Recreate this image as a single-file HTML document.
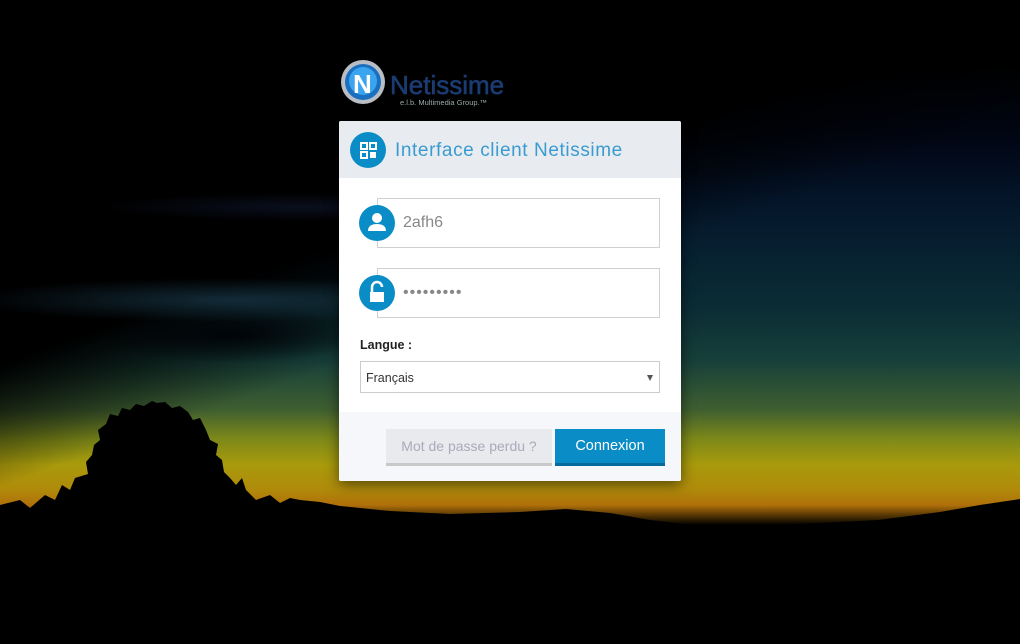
<!DOCTYPE html>
<html><head><meta charset="utf-8"><style>
*{margin:0;padding:0;box-sizing:border-box}
body{width:1020px;height:644px;overflow:hidden;position:relative;font-family:"Liberation Sans",sans-serif;background:#000}
.bg{position:absolute;inset:0;
background:linear-gradient(180deg,#000 0,#000 60px,#010614 140px,#04152a 200px,#072231 260px,#0b2d35 310px,#163f3a 360px,#3f5f30 410px,#7f8a18 440px,#a99a0c 465px,#b08a0a 490px,#b0700a 505px,#000 525px,#000 100%);}
.dark{position:absolute;inset:0;
background:
linear-gradient(160deg,#000 0,#000 36%,rgba(0,0,0,0) 48%),
radial-gradient(ellipse 380px 110px at 180px 240px,rgba(0,0,0,.85),transparent 80%);}
.cl{position:absolute;inset:0;background:
radial-gradient(ellipse 260px 22px at 230px 300px,rgba(30,70,90,.6),transparent),
radial-gradient(ellipse 140px 28px at 230px 335px,rgba(0,2,6,.95),transparent),
radial-gradient(ellipse 200px 14px at 300px 207px,rgba(20,30,60,.5),transparent)}
.card{position:absolute;left:339px;top:121px;width:342px;height:360px;background:#fff;border-radius:2px;box-shadow:0 3px 14px rgba(0,0,0,.55);overflow:hidden}
.hd{height:57px;background:#e8ecf0;position:relative}
.circ{position:absolute;width:36px;height:36px;border-radius:50%;background:#0a8dc6}
.hd .circ{left:11px;top:11px}
.hd .t{position:absolute;left:56px;top:19px;font-size:19px;color:#3a9bd0;letter-spacing:.6px}
.inp{position:absolute;left:38px;width:283px;height:50px;border:1px solid #d0d0d0;background:#fff;font-size:16px;color:#888;padding:15px 0 0 25px}
.ic{position:absolute;left:20px}
.lbl{position:absolute;left:21px;top:217px;font-weight:bold;font-size:12.5px;color:#222}
.sel{position:absolute;left:21px;top:240px;width:300px;height:32px;border:1px solid #ccc;font-size:12.5px;color:#333;padding:9px 0 0 5px}
.sel:after{content:"";position:absolute;right:6px;top:13px;border:3.5px solid transparent;border-top:6px solid #555}
.ft{position:absolute;left:0;top:291px;width:342px;height:69px;background:#f5f7fa}
.b1{position:absolute;left:47px;top:17px;width:166px;height:37px;background:#e8eaed;border-bottom:3px solid #c8c8c8;color:#aab;font-size:14px;text-align:center;line-height:35px}
.b2{position:absolute;left:216px;top:17px;width:110px;height:37px;background:#0a8dc6;border-bottom:3px solid #076a9a;color:#fff;font-size:14.5px;text-align:center;line-height:35px}
.logo{position:absolute;left:340px;top:58px}
</style></head><body>
<div class="bg"></div><div class="dark"></div><div class="cl"></div>
<svg style="position:absolute;left:0;top:0" width="1020" height="644">
<path fill="#000" d="M0 505 L20 500 L30 508 L45 495 L55 500 L62 485 L70 490 L75 478 L88 474 L86 462 L92 455 L94 445 L100 440 L98 430 L106 424 L110 414 L118 416 L122 408 L130 410 L136 404 L144 406 L152 401 L157 403 L165 402 L172 408 L180 406 L188 412 L193 420 L200 418 L206 430 L210 440 L218 444 L216 455 L222 460 L224 472 L230 478 L236 485 L242 478 L246 490 L256 500 L270 495 L280 503 L290 498 L300 500 L320 502 L340 506 L390 511 L450 514 L520 512 L566 509 L610 513 L650 520 L700 526 L748 527 L800 524 L878 520 L940 512 L980 505 L1020 499 L1020 644 L0 644Z"/>
</svg>
<div class="logo">
<svg width="180" height="50">
<circle cx="23" cy="24" r="22" fill="#b8bec4"/><circle cx="23" cy="24" r="18" fill="#1a6fc0"/><circle cx="23" cy="23" r="14" fill="#3aa4ee"/>
<text x="13" y="35" font-family="Liberation Sans" font-weight="bold" font-size="26" fill="#fff">N</text>
<text x="50" y="36" font-family="Liberation Sans" font-size="26" fill="#1b3c72" stroke="#1b3c72" stroke-width=".6">Netissime</text>
<text x="60" y="47" font-family="Liberation Sans" font-size="7.5" fill="#9aa">e.l.b. Multimedia Group.™</text>
</svg></div>
<div class="card">
<div class="hd"><div class="circ"><svg width="36" height="36"><g fill="none" stroke="#fff" stroke-width="2"><rect x="11" y="11" width="6" height="6"/><rect x="20" y="11" width="6" height="6"/><rect x="11" y="20" width="6" height="6"/></g><rect x="20" y="20" width="6" height="6" fill="#fff"/></svg></div><div class="t">Interface client Netissime</div></div>
<div class="inp" style="top:77px">2afh6</div>
<div class="circ ic" style="top:84px"><svg width="36" height="36"><circle cx="18" cy="13" r="5" fill="#fff"/><path d="M9 26 Q9 19 18 19 Q27 19 27 26Z" fill="#fff"/></svg></div>
<div class="inp" style="top:147px;letter-spacing:1px">•••••••••</div>
<div class="circ ic" style="top:154px"><svg width="36" height="36"><path d="M13 17 V12 a5 5 0 0 1 10 0" fill="none" stroke="#fff" stroke-width="2.5"/><rect x="11" y="17" width="14" height="10" fill="#fff"/></svg></div>
<div class="lbl">Langue :</div>
<div class="sel">Français</div>
<div class="ft"><div class="b1">Mot de passe perdu ?</div><div class="b2">Connexion</div></div>
</div>
</body></html>
